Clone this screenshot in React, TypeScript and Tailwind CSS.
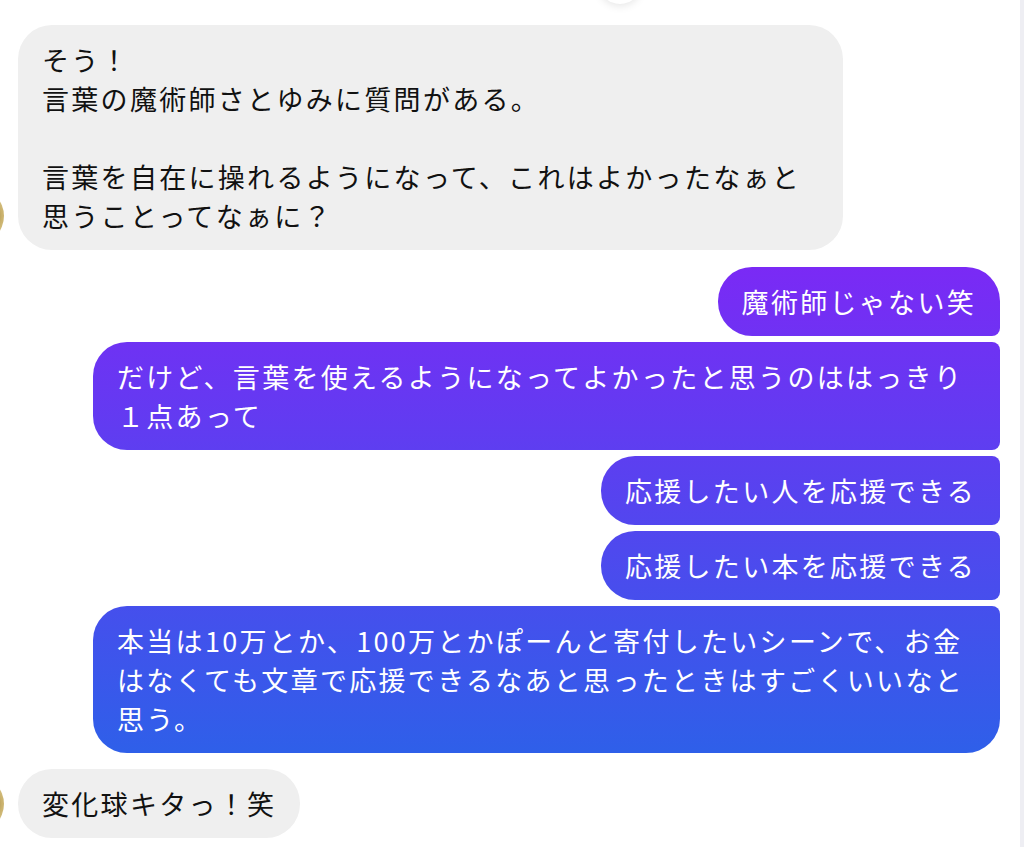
const grad =
  'bg-[linear-gradient(180deg,#7a2af5_268px,#2f5fe9_750px)] bg-fixed text-white';

function Avatar() {
  return (
    <div className="w-[56px] h-[56px] shrink-0 rounded-full -ml-[52px] mr-[14px] mb-[6px] bg-[radial-gradient(circle_at_70%_50%,#6f5e30_0%,#c9b06a_30%,#e8dba8_60%,#b89a50_100%)]" />
  );
}

function Theirs({ children, wide }: { children: React.ReactNode; wide?: boolean }) {
  return (
    <div className="flex items-end">
      <Avatar />
      <div
        className={
          'bg-[#efefef] text-[#111111] rounded-[34px] px-[24px] py-[15px] ' +
          (wide ? 'w-[825px]' : '')
        }
      >
        {children}
      </div>
    </div>
  );
}

function Mine({
  children,
  corners,
  wide,
}: {
  children: React.ReactNode;
  corners: string;
  wide?: boolean;
}) {
  return (
    <div className="flex justify-end">
      <div className={`${grad} ${corners} px-[24px] py-[15px] ${wide ? 'w-[907px]' : ''}`}>
        {children}
      </div>
    </div>
  );
}

export default function App() {
  return (
    <div
      className="flex w-[1024px] h-[847px] overflow-hidden bg-white text-[27px] leading-[39px] tracking-[2.3px]"
      style={{ fontFamily: '"Noto Sans CJK JP", "Noto Sans", sans-serif' }}
    >
      <div className="w-[1020px] flex flex-col pr-[20px] pt-[25px]">
        {/* seen-by bubble peeking from above */}
        <div className="h-0 flex justify-start pl-[598px]">
          <div className="w-[44px] h-[44px] -mt-[65px] rounded-full bg-white shadow-[0_2px_8px_rgba(0,0,0,0.10)]" />
        </div>

        <Theirs wide>
          そう！
          <br />
          言葉の魔術師さとゆみに質問がある。
          <br />
          <br />
          言葉を自在に操れるようになって、これはよかったなぁと
          <br />
          思うことってなぁに？
        </Theirs>

        <div className="flex flex-col gap-[6px] mt-[17px] mb-[16px]">
          <Mine corners="rounded-[34px] rounded-br-[8px]">魔術師じゃない笑</Mine>
          <Mine wide corners="rounded-[34px] rounded-tr-[8px] rounded-br-[8px]">
            だけど、言葉を使えるようになってよかったと思うのははっきり
            <br />
            １点あって
          </Mine>
          <Mine corners="rounded-[34px] rounded-tr-[8px] rounded-br-[8px]">
            応援したい人を応援できる
          </Mine>
          <Mine corners="rounded-[34px] rounded-tr-[8px] rounded-br-[8px]">
            応援したい本を応援できる
          </Mine>
          <Mine wide corners="rounded-[34px] rounded-tr-[8px]">
            本当は10万とか、100万とかぽーんと寄付したいシーンで、お金
            <br />
            はなくても文章で応援できるなあと思ったときはすごくいいなと
            <br />
            思う。
          </Mine>
        </div>

        <Theirs>変化球キタっ！笑</Theirs>
      </div>
      <div className="w-[4px] h-full bg-[#eeeef3]" />
    </div>
  );
}
